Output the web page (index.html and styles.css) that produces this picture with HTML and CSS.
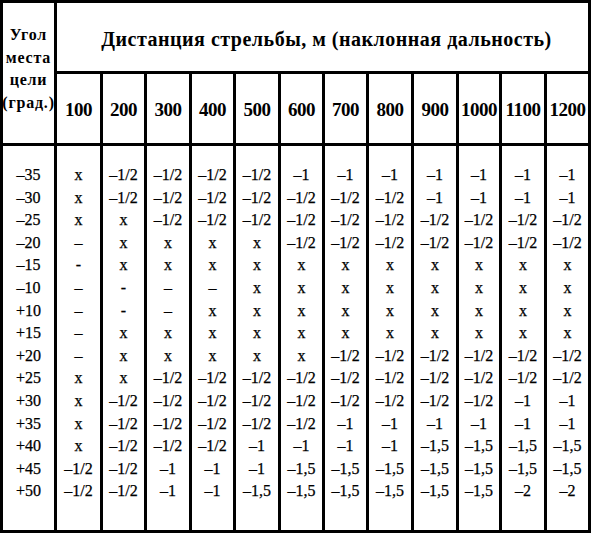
FILE: index.html
```html
<!DOCTYPE html>
<html lang="ru">
<head>
<meta charset="utf-8">
<title>Дистанция стрельбы</title>
<link rel="stylesheet" href="styles.css">
</head>
<body>
<div class="sheet">
  <div class="corner"><span>Угол</span><span>места</span><span>цели</span><span>(град.)</span></div>
  <div class="title">Дистанция стрельбы, м (наклонная дальность)</div>
  <div class="head">100</div>
  <div class="head">200</div>
  <div class="head">300</div>
  <div class="head">400</div>
  <div class="head">500</div>
  <div class="head">600</div>
  <div class="head">700</div>
  <div class="head">800</div>
  <div class="head">900</div>
  <div class="head">1000</div>
  <div class="head">1100</div>
  <div class="head">1200</div>

  <div class="col"><div>–35</div><div>–30</div><div>–25</div><div>–20</div><div>–15</div><div>–10</div><div>+10</div><div>+15</div><div>+20</div><div>+25</div><div>+30</div><div>+35</div><div>+40</div><div>+45</div><div>+50</div></div>
  <div class="col"><div>х</div><div>х</div><div>х</div><div>–</div><div>-</div><div>–</div><div>–</div><div>–</div><div>–</div><div>х</div><div>х</div><div>х</div><div>х</div><div>–1/2</div><div>–1/2</div></div>
  <div class="col"><div>–1/2</div><div>–1/2</div><div>х</div><div>х</div><div>х</div><div>-</div><div>-</div><div>х</div><div>х</div><div>х</div><div>–1/2</div><div>–1/2</div><div>–1/2</div><div>–1/2</div><div>–1/2</div></div>
  <div class="col"><div>–1/2</div><div>–1/2</div><div>–1/2</div><div>х</div><div>х</div><div>–</div><div>–</div><div>х</div><div>х</div><div>–1/2</div><div>–1/2</div><div>–1/2</div><div>–1/2</div><div>–1</div><div>–1</div></div>
  <div class="col"><div>–1/2</div><div>–1/2</div><div>–1/2</div><div>х</div><div>х</div><div>–</div><div>х</div><div>х</div><div>х</div><div>–1/2</div><div>–1/2</div><div>–1/2</div><div>–1/2</div><div>–1</div><div>–1</div></div>
  <div class="col"><div>–1/2</div><div>–1/2</div><div>–1/2</div><div>х</div><div>х</div><div>х</div><div>х</div><div>х</div><div>х</div><div>–1/2</div><div>–1/2</div><div>–1/2</div><div>–1</div><div>–1</div><div>–1,5</div></div>
  <div class="col"><div>–1</div><div>–1/2</div><div>–1/2</div><div>–1/2</div><div>х</div><div>х</div><div>х</div><div>х</div><div>х</div><div>–1/2</div><div>–1/2</div><div>–1/2</div><div>–1</div><div>–1,5</div><div>–1,5</div></div>
  <div class="col"><div>–1</div><div>–1/2</div><div>–1/2</div><div>–1/2</div><div>х</div><div>х</div><div>х</div><div>х</div><div>–1/2</div><div>–1/2</div><div>–1/2</div><div>–1</div><div>–1</div><div>–1,5</div><div>–1,5</div></div>
  <div class="col"><div>–1</div><div>–1/2</div><div>–1/2</div><div>–1/2</div><div>х</div><div>х</div><div>х</div><div>х</div><div>–1/2</div><div>–1/2</div><div>–1/2</div><div>–1</div><div>–1</div><div>–1,5</div><div>–1,5</div></div>
  <div class="col"><div>–1</div><div>–1</div><div>–1/2</div><div>–1/2</div><div>х</div><div>х</div><div>х</div><div>х</div><div>–1/2</div><div>–1/2</div><div>–1/2</div><div>–1</div><div>–1,5</div><div>–1,5</div><div>–1,5</div></div>
  <div class="col"><div>–1</div><div>–1</div><div>–1/2</div><div>–1/2</div><div>х</div><div>х</div><div>х</div><div>х</div><div>–1/2</div><div>–1/2</div><div>–1/2</div><div>–1</div><div>–1,5</div><div>–1,5</div><div>–1,5</div></div>
  <div class="col"><div>–1</div><div>–1</div><div>–1/2</div><div>–1/2</div><div>х</div><div>х</div><div>х</div><div>х</div><div>–1/2</div><div>–1/2</div><div>–1</div><div>–1</div><div>–1,5</div><div>–1,5</div><div>–2</div></div>
  <div class="col"><div>–1</div><div>–1</div><div>–1/2</div><div>–1/2</div><div>х</div><div>х</div><div>х</div><div>х</div><div>–1/2</div><div>–1/2</div><div>–1</div><div>–1</div><div>–1,5</div><div>–1,5</div><div>–2</div></div>
</div>
</body>
</html>
```
FILE: styles.css
```css
html, body {
  margin: 0;
  padding: 0;
  background: #fff;
}

.sheet {
  display: grid;
  width: 591px;
  box-sizing: border-box;
  padding: 3px;
  gap: 3px;
  background: #000;
  grid-template-columns: 51px 43px 41px 42px 41px 42px 41px 41px 42px 42px 40px 42px 41px;
  grid-template-rows: 68px 69px 384px;
  font-family: "Liberation Serif", "Times New Roman", serif;
  color: #000;
}

.sheet > div {
  background: #fff;
}

.corner {
  grid-column: 1;
  grid-row: 1 / span 2;
  display: flex;
  flex-direction: column;
  align-items: center;
  padding-top: 21px;
  font-weight: bold;
  font-size: 16px;
  line-height: 22.5px;
  letter-spacing: 0.8px;
  white-space: nowrap;
}

.title {
  grid-column: 2 / span 12;
  grid-row: 1;
  display: flex;
  align-items: center;
  justify-content: center;
  padding-top: 4px;
  padding-left: 8px;
  box-sizing: border-box;
  font-weight: bold;
  font-size: 20px;
  letter-spacing: 0.5px;
  white-space: nowrap;
}

.head {
  grid-row: 2;
  display: flex;
  align-items: center;
  justify-content: center;
  padding-top: 3px;
  box-sizing: border-box;
  font-weight: bold;
  font-size: 19px;
  letter-spacing: -0.5px;
}

.col {
  grid-row: 3;
  display: flex;
  flex-direction: column;
  align-items: center;
  padding-top: 18px;
  font-size: 16px;
  line-height: 22.6px;
  white-space: nowrap;
  -webkit-text-stroke: 0.25px #000;
}
```
